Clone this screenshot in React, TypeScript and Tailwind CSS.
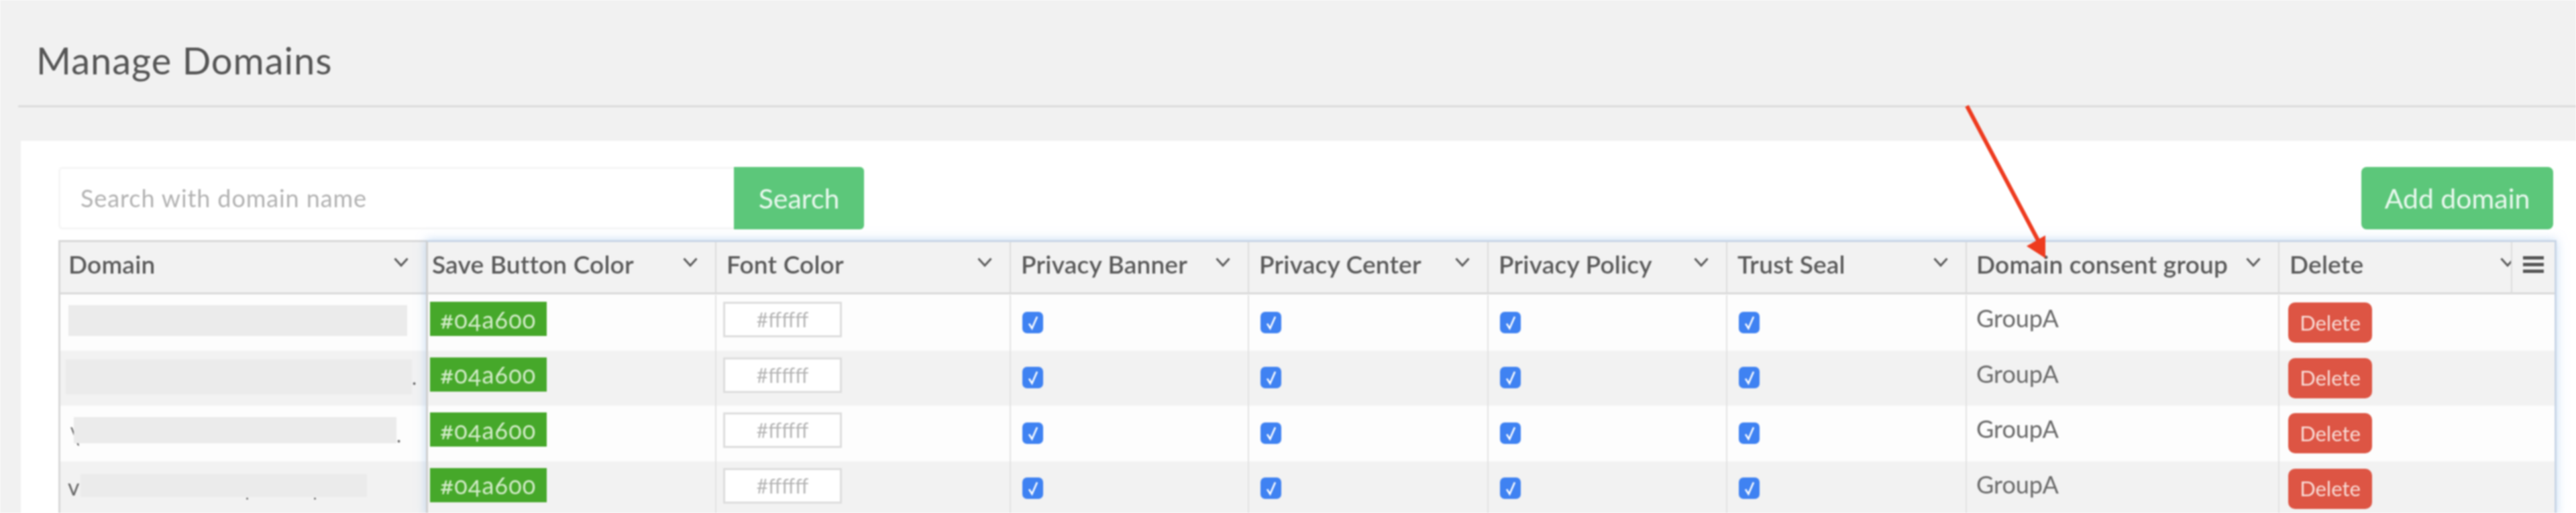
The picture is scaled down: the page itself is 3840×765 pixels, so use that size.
const FONT = "font-['Lato','Liberation_Sans',sans-serif]";

const COLS = [
  { title: "Save Button Color", pad: "pl-[6px]" },
  { title: "Font Color", pad: "pl-[15px]" },
  { title: "Privacy Banner", pad: "pl-[15px]" },
  { title: "Privacy Center", pad: "pl-[15px]" },
  { title: "Privacy Policy", pad: "pl-[15px]" },
  { title: "Trust Seal", pad: "pl-[15px]" },
  { title: "Domain consent group", pad: "pl-[14px]" },
];

function Chevron({ className = "" }: { className?: string }) {
  return (
    <svg viewBox="0 0 22 14" className={`h-[14px] w-[22px] shrink-0 ${className}`} fill="none" stroke="#5a5a5a" strokeWidth="3">
      <path d="M1.5 1.5 L11 12 L20.5 1.5" />
    </svg>
  );
}

function HeaderCell({ title, pad, first }: { title: string; pad: string; first?: boolean }) {
  return (
    <div className={`flex h-[75px] items-center overflow-hidden pb-[9px] pr-[26px] ${pad} ${first ? "" : "border-l-[2px] border-[#dcdcdc]"}`}>
      <span className="text-[37px] font-semibold tracking-[0.2px] text-[#5a5a5a]">{title}</span>
      <Chevron className="ml-auto -mt-[6px]" />
    </div>
  );
}

function CheckBox() {
  return (
    <span className="flex h-[32px] w-[31px] items-center justify-center rounded-[7px] bg-[#3f82f2]">
      <svg viewBox="0 0 16 22" className="h-[24px] w-[18px]" fill="none" stroke="#ffffff" strokeWidth="2.4">
        <path d="M2.5 12.5 L6.5 19 L13.5 3" />
      </svg>
    </span>
  );
}

function BodyCell({ pad, children }: { pad: string; children: React.ReactNode }) {
  return <div className={`h-full border-l-[2px] border-[#e3e3e3] ${pad}`}>{children}</div>;
}

function Row({ odd }: { odd: boolean }) {
  return (
    <div className={`grid h-[82.5px] grid-cols-[428px_439px_355px_357px_356px_357px_466px_1fr] ${odd ? "bg-[#fdfdfd]" : "bg-[#f2f2f2]"}`}>
      <div className="h-full pl-[3px] pt-[10px]">
        <div className="flex h-[51px] w-[174px] items-center justify-center bg-[#46a82a] text-[36px] tracking-[1.2px] text-[#d3ecc9] oldstyle-nums">#04a600</div>
      </div>
      <BodyCell pad="pl-[10px] pt-[10px]">
        <div className="flex h-[53px] w-[177px] items-center justify-center border-[3px] border-[#dddddd] bg-white text-[30px] text-[#b5b5b5]">#ffffff</div>
      </BodyCell>
      {[0, 1, 2, 3].map((i) => (
        <BodyCell key={i} pad="pl-[17px] pt-[24.5px]">
          <CheckBox />
        </BodyCell>
      ))}
      <BodyCell pad="pl-[14px] pt-[14px]">
        <span className="text-[36px] leading-[40px] text-[#6a6a6a]">GroupA</span>
      </BodyCell>
      <BodyCell pad="pl-[13px] pt-[11px]">
        <button className={`flex h-[60px] w-[125px] items-center justify-center rounded-[10px] bg-[#dd5544] text-[31px] text-[#f8dcd6] ${FONT}`}>Delete</button>
      </BodyCell>
    </div>
  );
}

const DOMAIN_ROWS = [
  { lead: "", leadW: "w-[12px]", w: "w-[505px]", h: "h-[46px]", pt: "pt-[15px]", tail: "", dots: false },
  { lead: "", leadW: "w-[8px]", w: "w-[516px]", h: "h-[52px]", pt: "pt-[13px]", tail: ".", dots: false },
  { lead: "\\", leadW: "w-[20px] pl-[14px] pt-[9px]", w: "w-[481px]", h: "h-[39px]", pt: "pt-[17px]", tail: ".", dots: false },
  { lead: "v", leadW: "w-[30px] pl-[11px]", w: "w-[427px]", h: "h-[34px]", pt: "pt-[19px]", tail: "", dots: true },
];

function DomainRow({ index }: { index: number }) {
  const r = DOMAIN_ROWS[index];
  return (
    <div className={`h-[82.5px] ${r.pt} ${index % 2 === 0 ? "bg-[#fdfdfd]" : "bg-[#f2f2f2]"}`}>
      <div className="flex">
        <span className={`${r.leadW} text-[34px] leading-[38px] text-[#666666]`}>{r.lead}</span>
        <div className={`relative ${r.w} ${r.h} bg-[#ebebeb]`}>
          {r.dots && <span className="absolute left-[247px] top-[35px] h-[3px] w-[3px] rounded-full bg-[#666666]" />}
          {r.dots && <span className="absolute left-[348px] top-[35px] h-[3px] w-[3px] rounded-full bg-[#666666]" />}
        </div>
        <span className="text-[30px] leading-[52px] text-[#666666]">{r.tail}</span>
      </div>
    </div>
  );
}

export default function App() {
  return (
    <div className={`relative h-[765px] w-[3840px] overflow-hidden bg-[#f1f1f1] blur-[1px] ${FONT}`}>
      <header className="ml-[27px] flex h-[160px] items-center border-b-[3px] border-[#dcdcdc] pl-[27px]">
        <h1 className="mt-[23px] text-[56px] font-normal tracking-[1px] text-[#555555]">Manage Domains</h1>
      </header>

      <main className="ml-[31px] mt-[50px] h-[600px] bg-white pl-[56px] pr-[29px] pt-[39px]">
        <div className="mb-[16px] flex h-[93px] items-stretch justify-between">
          <div className="flex w-[1201px]">
            <div className="flex flex-1 items-center rounded-l-[6px] border-[3px] border-r-0 border-[#f6f6f6] bg-white pb-[2px] pl-[30px] text-[36px] tracking-[0.9px] text-[#b2b2b2]">
              Search with domain name
            </div>
            <button className="w-[194px] rounded-r-[6px] bg-[#5cc77a] text-[41px] text-[#e9f8ee]">Search</button>
          </div>
          <button className="mr-[5px] w-[286px] rounded-[8px] bg-[#5cc77a] text-[41px] text-[#e9f8ee]">Add domain</button>
        </div>

        <div className="flex">
          <div className="w-[548px] shrink-0 border-l-[3px] border-t-[3px] border-[#d8d8d8]">
            <div className="border-b-[3px] border-[#dadada] bg-[#f2f2f2]">
              <HeaderCell title="Domain" pad="pl-[12px]" first />
            </div>
            <div className="bg-[#fdfdfd] pt-[1px]">
              {[0, 1, 2, 3].map((i) => (
                <DomainRow key={i} index={i} />
              ))}
            </div>
          </div>

          <div className="w-[3176px] shrink-0 border-r-[3px] border-t-[3px] border-l-[3px] border-[#c9d6e6] border-l-[#cfcfcf] shadow-[0_0_14px_rgba(150,190,235,0.55)]">
            <div className="grid grid-cols-[428px_439px_355px_357px_356px_357px_466px_1fr] border-b-[3px] border-[#dadada] bg-[#f2f2f2]">
              {COLS.map((c, i) => (
                <HeaderCell key={c.title} title={c.title} pad={c.pad} first={i === 0} />
              ))}
              <div className="flex h-[75px] border-l-[2px] border-[#dcdcdc]">
                <div className="flex w-[345px] items-center overflow-hidden pb-[9px] pl-[15px]">
                  <span className="text-[37px] font-semibold tracking-[0.2px] text-[#5a5a5a]">Delete</span>
                  <Chevron className="ml-auto -mr-[6px] -mt-[6px]" />
                </div>
                <div className="flex flex-1 items-center justify-center border-l-[2px] border-[#dcdcdc] pb-[9px]">
                  <div className="flex h-[25px] w-[31px] flex-col justify-between">
                    <span className="h-[5px] bg-[#555555]" />
                    <span className="h-[5px] bg-[#555555]" />
                    <span className="h-[5px] bg-[#555555]" />
                  </div>
                </div>
              </div>
            </div>
            <div className="bg-[#fdfdfd] pt-[1px]">
              {[0, 1, 2, 3].map((i) => (
                <Row key={i} odd={i % 2 === 0} />
              ))}
            </div>
          </div>
        </div>
      </main>

      <svg className="pointer-events-none absolute left-[2920px] top-[150px] h-[240px] w-[140px]" viewBox="0 0 140 240" fill="none">
        <path d="M12 8 L120 212" stroke="#ee3b1f" strokeWidth="6" />
        <path d="M129 201 L101 217 L129 235 Z" fill="#ee3b1f" />
      </svg>
    </div>
  );
}
